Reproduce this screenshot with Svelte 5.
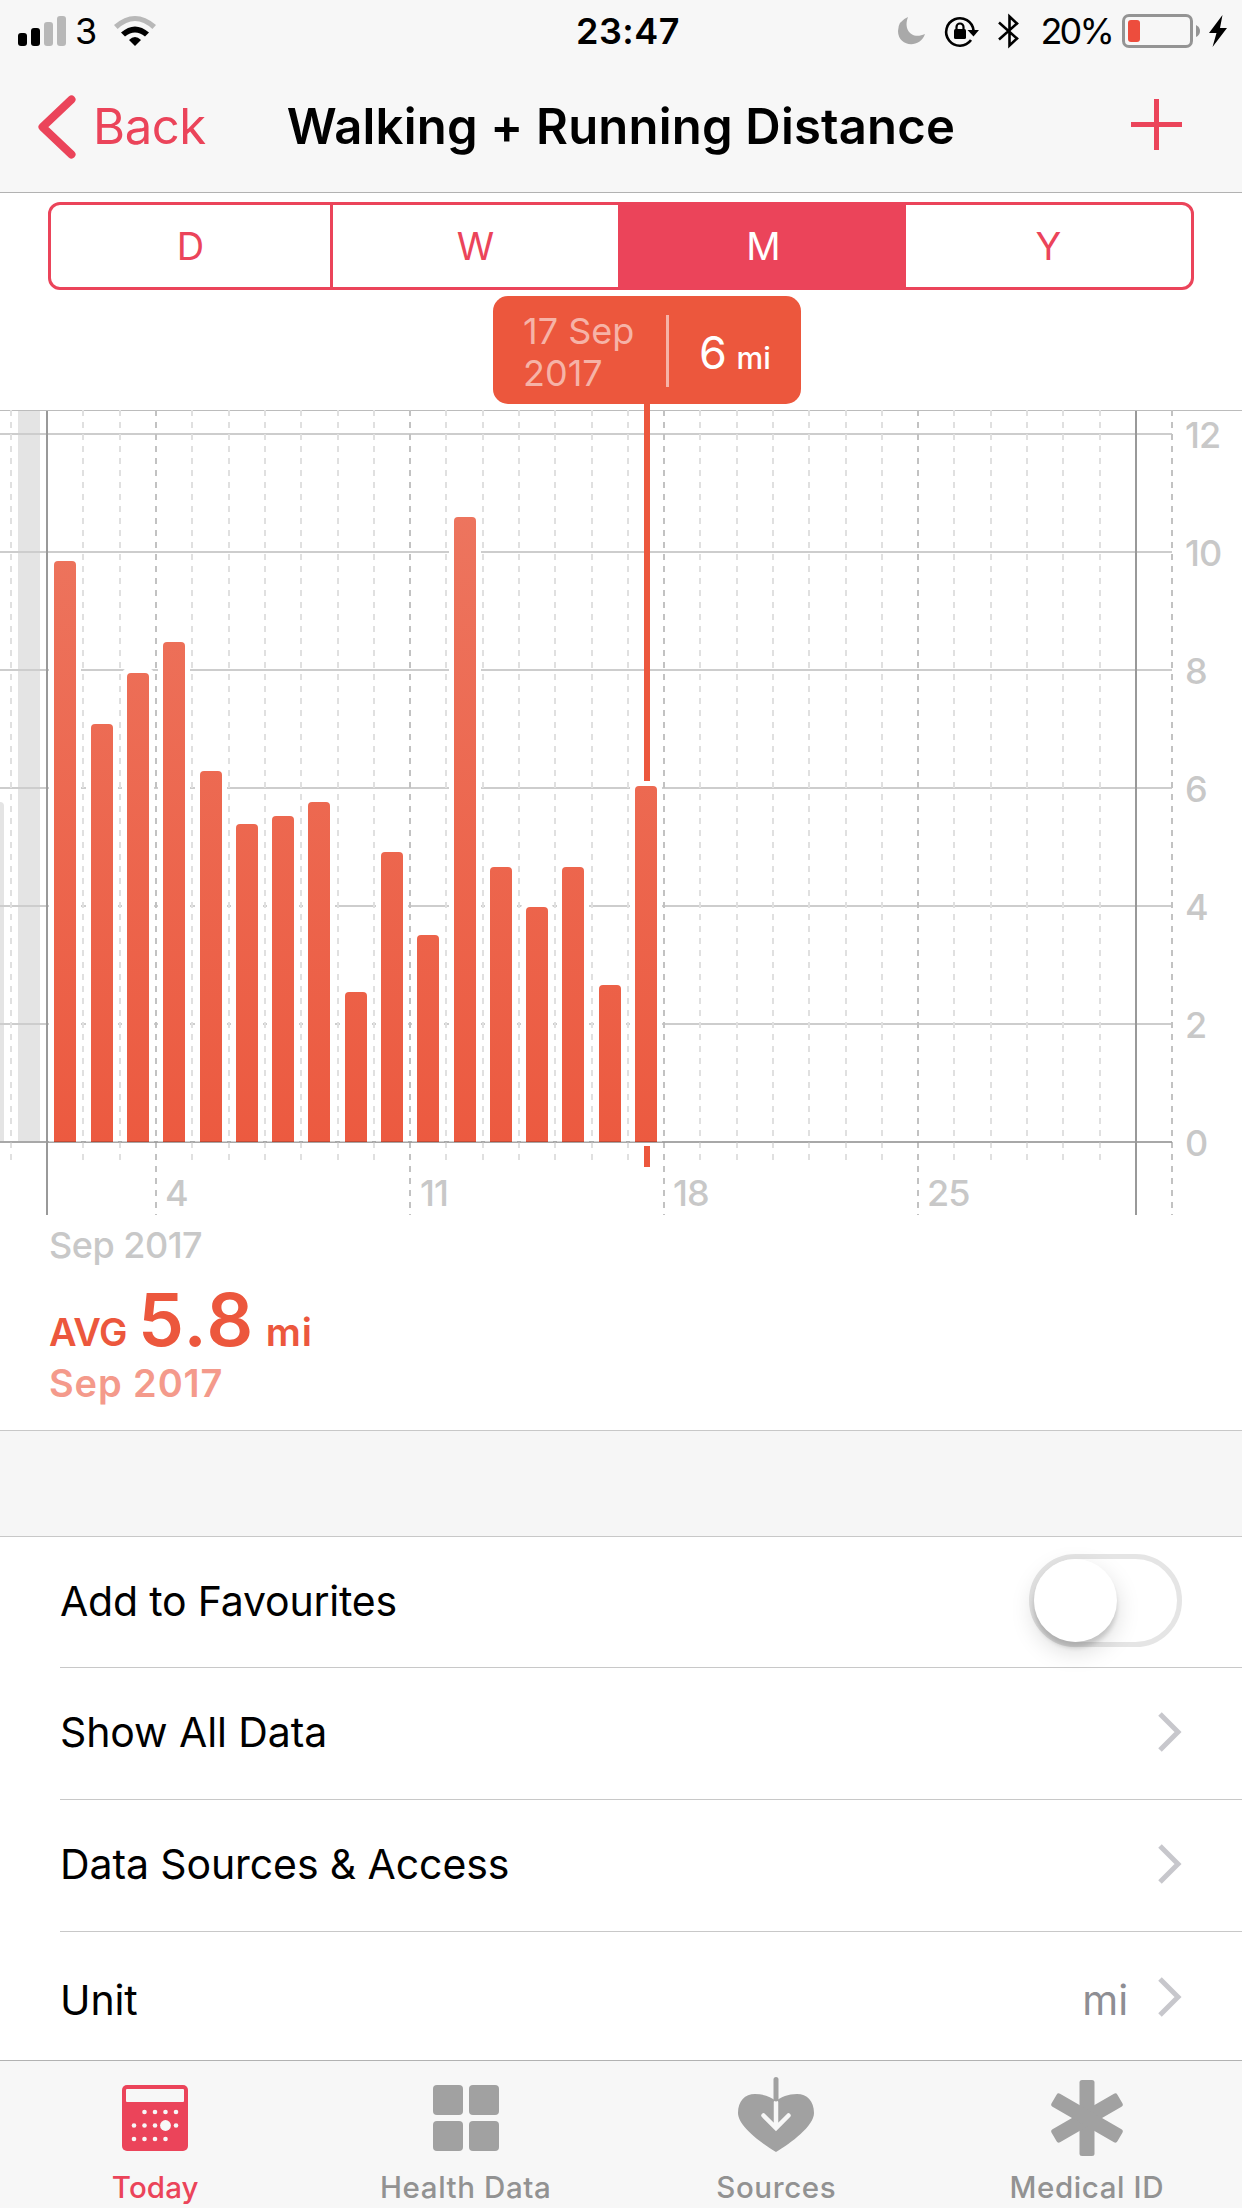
<script lang="ts">
  const ranges = ["D", "W", "M", "Y"];
  let range = $state("M");
  let favourite = $state(false);

  // Miles per day, from 1 September
  const days = [
    9.85, 7.08, 7.95, 8.47, 6.29, 5.39, 5.53, 5.76, 2.54, 4.92, 3.51, 10.59,
    4.66, 3.98, 4.66, 2.66, 6.03,
  ];

  const baseline = 732;
  const bars = days.map((miles, i) => ({
    x: Math.round(54.35 + i * 36.293),
    y: baseline - Math.round(miles * 59),
  }));

  const columns = Array.from({ length: 33 }, (_, i) => i - 1)
    .filter((day) => day !== 0 && day !== 30)
    .map((day) => ({
      x: Math.round(47.2 + day * 36.29),
      major: day > 0 && day % 7 === 3,
    }))
    .filter((column) => column.x < 1180);

  const rows = [12, 10, 8, 6, 4, 2, 0].map((value, i) => ({
    value,
    y: 24 + i * 118,
  }));

  const weeks = [
    { label: "4", x: 165 },
    { label: "11", x: 420 },
    { label: "18", x: 673 },
    { label: "25", x: 927 },
  ];

  function barPath(x: number, y: number, w: number, r: number) {
    return `M${x} ${baseline}V${y + r}q0 ${-r} ${r} ${-r}h${w - 2 * r}q${r} 0 ${r} ${r}V${baseline}z`;
  }
</script>

{#snippet chevron()}
  <svg class="chevron" width="24" height="40" viewBox="0 0 24 40">
    <path d="M2 2l18 18-18 18" fill="none" stroke="#c7c7cc" stroke-width="5" />
  </svg>
{/snippet}

<div class="screen">
  <header>
    <div class="status">
      <div class="status-left">
        <svg width="49" height="30" viewBox="0 0 49 30">
          <rect x="0" y="17" width="9" height="13" rx="3" />
          <rect x="13" y="12" width="9" height="18" rx="3" />
          <rect x="26" y="6" width="9" height="24" rx="3" fill="#b8b8b8" />
          <rect x="39" y="0" width="9" height="30" rx="3" fill="#b8b8b8" />
        </svg>
        <span class="carrier">3</span>
        <svg width="42" height="30" viewBox="0 0 42 30">
          <path d="M0 9Q21-9 42 9l-3.600 4Q21-3 3.600 13z" fill="#b8b8b8" />
          <path d="M7 16.500Q21 4.500 35 16.500l-4 4Q21 12.500 11 20.500z" />
          <path d="M15 24Q21 18 27 24l-6 6z" />
        </svg>
      </div>
      <span class="time">23:47</span>
      <div class="status-right">
        <svg class="moon" width="28" height="28" viewBox="0 0 28 28">
          <path
            d="M10 0C5 13 14 23 27 17C22 32 0 30 0 14Q0 4 10 0z"
            fill="#a9a9a9"
          />
        </svg>
        <svg class="lock" width="35" height="30" viewBox="0 0 35 30">
          <path
            d="M26 24A13.700 13.700 0 1 1 28.500 14.500"
            fill="none"
            stroke="#000"
            stroke-width="2.600"
          />
          <path d="M22.500 14H34l-5.500 6.500z" />
          <rect x="9" y="13" width="12" height="10" rx="1.500" />
          <path
            d="M11.500 14v-3a3.500 3.500 0 0 1 7 0v3"
            fill="none"
            stroke="#000"
            stroke-width="2.200"
          />
        </svg>
        <svg class="bluetooth" width="22" height="36" viewBox="0 0 22 36">
          <path
            d="M1 9.500L19 25.500 11.500 32.500V3.500L19 10.500 1 26.500"
            fill="none"
            stroke="#000"
            stroke-width="2.600"
          />
        </svg>
        <span class="percent">20%</span>
        <svg class="battery" width="79" height="34" viewBox="0 0 79 34">
          <rect
            x="1.500"
            y="1.500"
            width="68"
            height="31"
            rx="5.500"
            fill="none"
            stroke="#949494"
            stroke-width="3"
          />
          <rect x="6" y="6" width="12" height="22" rx="3" fill="#ed4d3d" />
          <path d="M74 11q4 2 4 6t-4 6z" fill="#949494" />
        </svg>
        <svg class="bolt" width="18" height="32" viewBox="0 0 18 32">
          <path d="M13.500 0L0 18h7.500L3.500 32 18 13h-7z" />
        </svg>
      </div>
    </div>

    <nav>
      <button class="back">
        <svg width="38" height="64" viewBox="0 0 38 64">
          <path
            d="M33.500 4.500L4.500 32l29 27.500"
            fill="none"
            stroke="#eb445a"
            stroke-width="8"
            stroke-linecap="round"
            stroke-linejoin="round"
          />
        </svg>
        <span>Back</span>
      </button>
      <h1>Walking + Running Distance</h1>
      <button class="add" aria-label="Add data">
        <svg width="51" height="51" viewBox="0 0 51 51">
          <path d="M25.500 0v51M0 25.500h51" stroke="#eb445a" stroke-width="5" />
        </svg>
      </button>
    </nav>
  </header>

  <div class="segments">
    {#each ranges as name}
      <button class:selected={name === range} onclick={() => (range = name)}>
        {name}
      </button>
    {/each}
  </div>

  <section class="chart">
    <svg class="plot" width="1242" height="810" viewBox="0 0 1242 810">
      <defs>
        <linearGradient
          id="fill"
          gradientUnits="userSpaceOnUse"
          x1="0"
          y1="24"
          x2="0"
          y2="732"
        >
          <stop offset="0" stop-color="#ed7862" />
          <stop offset="1" stop-color="#ec5a40" />
        </linearGradient>
      </defs>

      <rect width="1242" height="1" fill="#bcbcbc" />
      <rect x="18" y="1" width="22" height="731" fill="#e4e4e4" />
      <path d="M0 392q4 0 4 4v336H0z" fill="#e4e4e4" />

      {#each rows as row}
        <rect y={row.y - 1} width="1172" height="2" fill="#cdcdcd" />
        <text class="tick" x="1185" y={row.y + 14}>{row.value}</text>
      {/each}

      {#each bars as bar}
        <path d={barPath(bar.x - 5, bar.y - 5, 32, 7)} fill="#fff" />
      {/each}

      {#each columns as column}
        <line
          x1={column.x}
          x2={column.x}
          y1="0"
          y2={column.major ? 805 : 750}
          stroke={column.major ? "#c2c2c2" : "#e0e0e0"}
          stroke-width="2"
          stroke-dasharray="6 6"
        />
      {/each}

      {#each bars as bar}
        <path d={barPath(bar.x, bar.y, 22, 4)} fill="url(#fill)" />
      {/each}

      <rect y="731" width="1172" height="2" fill="#000" fill-opacity=".18" />
      <rect x="46" y="1" width="2" height="804" fill="#999" />
      <rect x="1135" y="1" width="2" height="804" fill="#999" />
      <rect x="644" y="-7" width="6" height="378" fill="#ec573d" />
      <rect x="644" y="736" width="6" height="21" fill="#ec573d" />

      {#each weeks as week}
        <text class="tick" x={week.x} y="796">{week.label}</text>
      {/each}
    </svg>

    <div class="callout">
      <span class="callout-date">17 Sep<br />2017</span>
      <span class="callout-value">6 <small>mi</small></span>
    </div>
  </section>

  <section class="summary">
    <p class="month">Sep 2017</p>
    <p class="average">
      <span class="avg">AVG</span><span class="number">5.8</span><span
        class="unit">mi</span
      >
    </p>
    <p class="period">Sep 2017</p>
  </section>

  <section class="settings">
    <div class="row">
      <span>Add to Favourites</span>
      <button
        class="switch"
        class:on={favourite}
        role="switch"
        aria-checked={favourite}
        aria-label="Add to Favourites"
        onclick={() => (favourite = !favourite)}
      >
        <span class="knob"></span>
      </button>
    </div>
    <div class="row">
      <span>Show All Data</span>
      {@render chevron()}
    </div>
    <div class="row">
      <span>Data Sources &amp; Access</span>
      {@render chevron()}
    </div>
    <div class="row">
      <span>Unit</span>
      <span class="value">mi</span>
      {@render chevron()}
    </div>
  </section>

  <footer>
    <button class="tab active">
      <svg width="78" height="78" viewBox="0 0 78 78">
        <rect x="6" y="8" width="66" height="66" rx="5" fill="#eb445a" />
        <g fill="#f7f7f7">
          <rect x="10" y="12" width="58" height="13" rx="1" />
          {#each [28.500, 39, 49.500, 60] as x}
            <circle cx={x} cy="35" r="2.300" />
          {/each}
          {#each [18, 28.500, 39, 60] as x}
            <circle cx={x} cy="48.500" r="2.300" />
          {/each}
          {#each [18, 28.500, 39, 49.500] as x}
            <circle cx={x} cy="62" r="2.300" />
          {/each}
          <circle cx="49.500" cy="48.500" r="5.400" />
        </g>
      </svg>
      <span>Today</span>
    </button>
    <button class="tab">
      <svg width="78" height="78" viewBox="0 0 78 78" fill="#a1a1a1">
        <rect x="6" y="8" width="30" height="30" rx="4" />
        <rect x="42" y="8" width="30" height="30" rx="4" />
        <rect x="6" y="44" width="30" height="30" rx="4" />
        <rect x="42" y="44" width="30" height="30" rx="4" />
      </svg>
      <span>Health Data</span>
    </button>
    <button class="tab">
      <svg width="78" height="78" viewBox="0 0 78 78" fill="none">
        <path
          d="M39 75C24 66 1 49 1 36C1 24 8 17 18 17C27 17 34 20 39 24C44 20 51 17 60 17C70 17 77 24 77 36C77 49 54 66 39 75z"
          fill="#a1a1a1"
        />
        <path
          d="M39 25v26M26.500 38.500L39 51l12.500-12.500"
          stroke="#f7f7f7"
          stroke-width="4.500"
          stroke-linecap="round"
        />
        <path
          d="M39 2.500v19.500"
          stroke="#a1a1a1"
          stroke-width="5"
          stroke-linecap="round"
        />
      </svg>
      <span>Sources</span>
    </button>
    <button class="tab">
      <svg width="78" height="78" viewBox="0 0 78 78" fill="#a1a1a1">
        {#each [0, 60, 120] as angle}
          <rect
            x="31.500"
            y="3"
            width="15"
            height="76"
            rx="2.500"
            transform="rotate({angle} 39 41)"
          />
        {/each}
      </svg>
      <span>Medical ID</span>
    </button>
  </footer>
</div>

<style>
  :global(body) {
    margin: 0;
    background: #fff;
  }

  .screen {
    display: flex;
    flex-direction: column;
    width: 1242px;
    height: 2208px;
    overflow: hidden;
    background: #fff;
    color: #000;
    font-family: Inter, "Liberation Sans", sans-serif;
  }

  svg {
    display: block;
    flex-shrink: 0;
    overflow: visible;
  }

  button {
    padding: 0;
    border: none;
    background: none;
    color: inherit;
    font: inherit;
  }

  p,
  h1 {
    margin: 0;
  }

  header {
    box-sizing: border-box;
    height: 193px;
    background: #f7f7f7;
    border-bottom: 1px solid #b2b2b2;
  }

  .status {
    display: grid;
    grid-template-columns: 1fr auto 1fr;
    align-items: center;
    height: 62px;
    padding: 0 15px 0 18px;
    font-size: 36px;
    line-height: 62px;
  }

  .status-left,
  .status-right {
    display: flex;
    align-items: center;
  }

  .status-right {
    justify-content: flex-end;
  }

  .carrier {
    margin: 0 17px 0 8px;
  }

  .time {
    font-weight: 600;
    letter-spacing: 0.5px;
    padding-left: 11px;
  }

  .lock {
    margin-left: 19px;
  }

  .bluetooth {
    margin-left: 18px;
  }

  .percent {
    margin: 0 10px 0 20px;
    letter-spacing: -2.8px;
  }

  .bolt {
    margin-left: 8px;
  }

  nav {
    display: grid;
    grid-template-columns: 1fr auto 1fr;
    align-items: center;
    height: 130px;
    padding: 0 38px;
  }

  .back {
    display: flex;
    align-items: center;
    gap: 17px;
    color: #eb445a;
    font-size: 49px;
    line-height: 64px;
    letter-spacing: -0.4px;
  }

  h1 {
    font-size: 49px;
    font-weight: 600;
    letter-spacing: 0.2px;
    line-height: 64px;
  }

  .add {
    justify-self: end;
    margin: -5px 22px 0 0;
  }

  .segments {
    box-sizing: border-box;
    display: grid;
    grid-template-columns: 279px 288px 288px 1fr;
    height: 88px;
    margin: 9px 48px 0;
    border: 3px solid #eb445a;
    border-radius: 12px;
    overflow: hidden;
  }

  .segments button {
    color: #eb445a;
    font-size: 38px;
    line-height: 82px;
    border-left: 3px solid #eb445a;
  }

  .segments button:first-child,
  .segments .selected + button {
    border-left: none;
  }

  .segments .selected {
    background: #eb445a;
    color: #fff;
  }

  .chart {
    position: relative;
    padding-top: 120px;
  }

  .tick {
    font-size: 36px;
    font-weight: 500;
    letter-spacing: -1px;
    fill: #c8c8c8;
  }

  .callout {
    position: absolute;
    top: 6px;
    left: 493px;
    display: flex;
    align-items: center;
    box-sizing: border-box;
    width: 308px;
    height: 108px;
    padding: 4px 0 0 30px;
    border-radius: 15px;
    background: #ec573d;
    color: #fff;
  }

  .callout-date {
    width: 143px;
    color: #f6b3a7;
    font-size: 36px;
    line-height: 42.5px;
  }

  .callout-value {
    height: 72px;
    margin-top: -3px;
    padding-left: 30px;
    border-left: 3px solid #f6b3a7;
    font-size: 45px;
    line-height: 76px;
    white-space: nowrap;
  }

  .callout-value small {
    margin-left: -3px;
    font-size: 30px;
    font-weight: 500;
  }

  .summary {
    box-sizing: border-box;
    height: 211px;
    padding-left: 49px;
    border-bottom: 1px solid #c8c8c8;
  }

  .month {
    color: #c8c8c8;
    font-size: 36px;
    font-weight: 500;
    line-height: 50px;
    letter-spacing: -0.5px;
  }

  .average {
    display: flex;
    align-items: baseline;
    height: 100px;
    color: #ec573d;
    font-size: 38px;
    font-weight: 600;
    line-height: 100px;
  }

  .avg {
    letter-spacing: -0.5px;
  }

  .number {
    margin: 0 11px 0 11px;
    font-size: 73px;
    letter-spacing: 1.5px;
  }

  .unit {
    font-size: 39px;
    letter-spacing: 1px;
  }

  .period {
    color: #f49a8b;
    font-size: 38px;
    font-weight: 600;
    line-height: 27px;
    letter-spacing: 0.9px;
  }

  .settings {
    padding-left: 60px;
    border-top: 1px solid #c8c8c8;
    box-shadow: 0 -105px #f6f6f6;
    margin-top: 105px;
  }

  .row {
    display: flex;
    align-items: center;
    box-sizing: border-box;
    height: 132px;
    padding: 0 60px 3px 0;
    border-bottom: 1px solid #c8c8c8;
    font-size: 41px;
    line-height: 60px;
    letter-spacing: -0.1px;
  }

  .row:first-child {
    height: 131px;
    letter-spacing: -0.2px;
  }

  .row:last-child {
    height: 128px;
    padding: 2px 60px 0 0;
    border-bottom: none;
  }

  .row:last-child span {
    padding-top: 5px;
  }

  .chevron,
  .switch {
    margin-left: auto;
  }

  .value {
    margin-left: auto;
    color: #8e8e93;
  }

  .value + .chevron {
    margin-left: 30px;
  }

  .switch {
    box-sizing: border-box;
    width: 153px;
    height: 93px;
    border: 5px solid #e5e5e5;
    border-radius: 47px;
  }

  .switch.on {
    border-color: #4cd964;
    background: #4cd964;
  }

  .knob {
    display: block;
    width: 83px;
    height: 83px;
    border-radius: 50%;
    background: #fff;
    box-shadow:
      0 9px 24px rgba(0, 0, 0, 0.15),
      0 6px 4px rgba(0, 0, 0, 0.14);
  }

  .switch.on .knob {
    margin-left: auto;
  }

  footer {
    display: grid;
    grid-template-columns: repeat(4, 1fr);
    flex: 1;
    border-top: 1px solid #b2b2b2;
    background: #f7f7f7;
  }

  .tab {
    display: flex;
    flex-direction: column;
    align-items: center;
    padding-top: 16px;
    color: #929292;
    font-size: 29.500px;
    font-weight: 500;
    line-height: 40px;
    letter-spacing: 0.6px;
  }

  .tab span {
    margin-top: 12px;
  }

  .active {
    color: #eb445a;
    letter-spacing: 0.1px;
  }
</style>
